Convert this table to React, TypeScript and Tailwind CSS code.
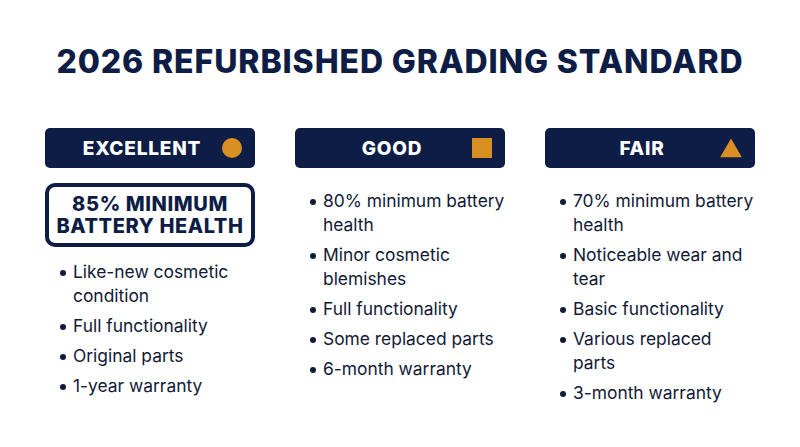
import React from 'react'

type Grade = {
  name: string
  shape: 'circle' | 'square' | 'triangle'
  callout?: string[]
  items: string[]
}

const grades: Grade[] = [
  {
    name: 'EXCELLENT',
    shape: 'circle',
    callout: ['85% MINIMUM', 'BATTERY HEALTH'],
    items: ['Like-new cosmetic condition', 'Full functionality', 'Original parts', '1-year warranty'],
  },
  {
    name: 'GOOD',
    shape: 'square',
    items: ['80% minimum battery health', 'Minor cosmetic blemishes', 'Full functionality', 'Some replaced parts', '6-month warranty'],
  },
  {
    name: 'FAIR',
    shape: 'triangle',
    items: ['70% minimum battery health', 'Noticeable wear and tear', 'Basic functionality', 'Various replaced parts', '3-month warranty'],
  },
]

function Shape({ shape }: { shape: Grade['shape'] }) {
  if (shape === 'circle') return <span className="block w-[20px] h-[20px] rounded-full bg-[#d98f22]" />
  if (shape === 'square') return <span className="block w-[20px] h-[20px] bg-[#d98f22]" />
  return (
    <svg width="22" height="19" viewBox="0 0 22 19" className="block">
      <polygon points="11,0 22,19 0,19" fill="#d98f22" />
    </svg>
  )
}

function GradeColumn({ grade }: { grade: Grade }) {
  return (
    <div className="w-[210px] shrink-0">
      <div className="relative flex items-center h-[40px] rounded-[5px] bg-[#0e1d45] pr-[16px] pt-[2px]">
        <span className="flex-1 text-center text-white font-extrabold text-[19px] tracking-[0.8px]">{grade.name}</span>
        <span className="absolute right-[13px] top-1/2 -translate-y-1/2">
          <Shape shape={grade.shape} />
        </span>
      </div>

      {grade.callout && (
        <div className="mt-[15px] border-[4px] border-[#0e1d45] rounded-[10px] py-[6px] text-center text-[#0e1d45] font-extrabold text-[20px] leading-[22px] tracking-[0.6px]">
          {grade.callout.map(line => (
            <div key={line}>{line}</div>
          ))}
        </div>
      )}

      <ul className={grade.callout ? 'mt-[13px] pl-[15px]' : 'mt-[21px] pl-[15px]'}>
        {grade.items.map(item => (
          <li key={item} className="flex gap-[7px] mb-[6px] text-[17.4px] leading-[24px] text-[#111a38]">
            <span className="shrink-0 mt-[10px] w-[6px] h-[6px] rounded-full bg-[#111a38]" />
            <span>{item}</span>
          </li>
        ))}
      </ul>
    </div>
  )
}

export default function App() {
  return (
    <div className="w-[800px] h-[447px] bg-white font-['Inter','Noto_Sans',sans-serif] overflow-hidden">
      <h1 className="pt-[42px] text-center text-[#0e1d45] font-extrabold text-[32px] leading-[40px] tracking-[0.9px]">
        2026 REFURBISHED GRADING STANDARD
      </h1>

      <div className="mt-[46px] flex px-[45px]">
        <GradeColumn grade={grades[0]} />
        <div className="mx-[20px] w-[2px] h-[277px] bg-[#2a3350]" />
        <GradeColumn grade={grades[1]} />
        <div className="mx-[20px] w-[2px] h-[277px] bg-[#2a3350]" />
        <GradeColumn grade={grades[2]} />
      </div>
    </div>
  )
}
